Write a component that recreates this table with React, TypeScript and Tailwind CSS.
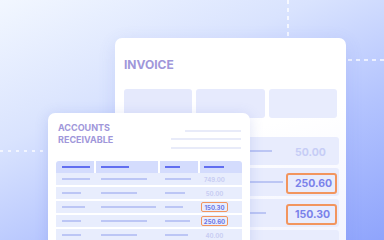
const font = { fontFamily: 'Inter, "Noto Sans", sans-serif' }

type ArRow = { bars: [number, number, number]; value: string; flagged?: boolean }

const arRows: ArRow[] = [
  { bars: [28, 46, 26], value: '749.00' },
  { bars: [19, 36, 20], value: '50.00' },
  { bars: [23, 55, 18], value: '150.30', flagged: true },
  { bars: [19, 46, 25], value: '250.60', flagged: true },
  { bars: [19, 36, 23], value: '40.00' },
]

type InvRow = { line: number; value: string; flagged?: boolean; faded?: boolean }

const invRows: InvRow[] = [
  { line: 142, value: '50.00', faded: true },
  { line: 153, value: '250.60', flagged: true },
  { line: 136, value: '150.30', flagged: true },
  { line: 120, value: '', faded: true },
]

const InvoiceCard = () => (
  <div className="relative ml-[115px] mt-[38px] h-[220px] w-[231px] rounded-[7px] bg-[linear-gradient(165deg,#ffffff_45%,#f1f3ff_100%)] px-[9px] pt-[21px] shadow-[0_4px_18px_rgba(80,100,210,0.12)]">
    <div className="h-[12px] text-[12px] font-bold leading-[12px] text-[#a097da]">INVOICE</div>
    <div className="mt-[18px] grid h-[29px] grid-cols-3 gap-[4px]">
      <div className="rounded-[3px] bg-[#e5e9fc]" />
      <div className="rounded-[3px] bg-[#e6eafd]" />
      <div className="rounded-[3px] bg-[#e8ecfd]" />
    </div>
    <div className="mt-[19px] flex w-[215px] flex-col gap-[3px]">
      {invRows.map((r, i) => (
        <div key={i} className="flex h-[28px] items-center rounded-[3px] bg-[#e8ecfd]">
          <div className="ml-[6px] h-[2px] bg-[#bcc6f4]" style={{ width: r.line }} />
          <div
            className={
              'ml-auto mr-[2px] mt-[3px] flex h-[21px] w-[51px] items-center rounded-[3px] border-2 pl-[7px] text-[10.5px] font-bold ' +
              (r.flagged ? 'border-[#f2955e] text-[#7a82ea]' : 'border-transparent text-[#c6cdf6]')
            }
          >
            {r.value}
          </div>
        </div>
      ))}
    </div>
  </div>
)

const ArCard = () => (
  <div className="absolute left-[48px] top-[113px] h-[140px] w-[202px] rounded-[7px] bg-white px-[8px] pt-[9px] shadow-[0_2px_14px_rgba(80,100,210,0.18)]">
    <div className="flex justify-between">
      <div className="ml-[2px] text-[9px] font-bold leading-[12px] text-[#a097da]">
        <div>ACCOUNTS</div>
        <div>RECEIVABLE</div>
      </div>
      <div className="mr-[1px] mt-[8px] flex flex-col items-end">
        <div className="h-[2px] w-[56px] bg-[#e8ebf9]" />
        <div className="mt-[6px] h-[2px] w-[70px] bg-[#e8ebf9]" />
        <div className="mt-[7px] h-[2px] w-[70px] bg-[#e8ebf9]" />
      </div>
    </div>

    <div className="mt-[12px]">
      <div className="grid h-[12px] grid-cols-[38px_62px_38px_1fr] gap-x-[2px]">
        <div className="flex items-center rounded-tl-[3px] bg-[#d4dcfd] pl-[6px]">
          <div className="h-[2px] w-[28px] bg-[#616ef0]" />
        </div>
        <div className="flex items-center bg-[#d4dcfd] pl-[5px]">
          <div className="h-[2px] w-[28px] bg-[#616ef0]" />
        </div>
        <div className="flex items-center bg-[#d4dcfd] pl-[5px]">
          <div className="h-[2px] w-[15px] bg-[#616ef0]" />
        </div>
        <div className="flex items-center rounded-tr-[3px] bg-[#d4dcfd] pl-[4px]">
          <div className="h-[2px] w-[20px] bg-[#616ef0]" />
        </div>
      </div>
      <div className="flex flex-col gap-[2px]">
        {arRows.map((r, i) => (
          <div key={i} className="grid h-[12px] grid-cols-[38px_62px_38px_1fr] gap-x-[2px] bg-[#e8edfd]">
            <div className="flex items-center pl-[6px]">
              <div className="h-[2px] bg-[#bcc6f5]" style={{ width: r.bars[0] }} />
            </div>
            <div className="flex items-center pl-[5px]">
              <div className="h-[2px] bg-[#bcc6f5]" style={{ width: r.bars[1] }} />
            </div>
            <div className="flex items-center pl-[5px]">
              <div className="h-[2px] bg-[#bcc6f5]" style={{ width: r.bars[2] }} />
            </div>
            <div className="flex items-center pl-[1px]">
              <div
                className={
                  'flex h-[10px] w-[27px] items-center justify-center rounded-[2px] border text-[6px] font-bold ' +
                  (r.flagged ? 'border-[#f2955e] text-[#6b75e6]' : 'border-transparent text-[#c8cef3]')
                }
              >
                {r.value}
              </div>
            </div>
          </div>
        ))}
      </div>
    </div>
  </div>
)

export default function App() {
  return (
    <div
      className="relative h-[240px] w-[384px] overflow-hidden bg-[linear-gradient(155deg,#f2f7ff_0%,#d9e3fe_35%,#b4c4fe_65%,#8fa4fc_100%)]"
      style={font}
    >
      {/* dashed guides */}
      <div className="absolute left-[287px] top-0 h-[60px] w-[2px] bg-[repeating-linear-gradient(to_bottom,rgba(255,255,255,0.75)_0_4px,transparent_4px_8px)]" />
      <div className="absolute left-[340px] top-[59px] h-[2px] w-[44px] bg-[repeating-linear-gradient(to_right,rgba(255,255,255,0.7)_0_4px,transparent_4px_8px)]" />
      <div className="absolute left-0 top-[150px] h-[2px] w-[48px] bg-[repeating-linear-gradient(to_right,rgba(255,255,255,0.7)_0_3px,transparent_3px_8px)]" />

      <div className="flex">
        <InvoiceCard />
      </div>
      <ArCard />
    </div>
  )
}
